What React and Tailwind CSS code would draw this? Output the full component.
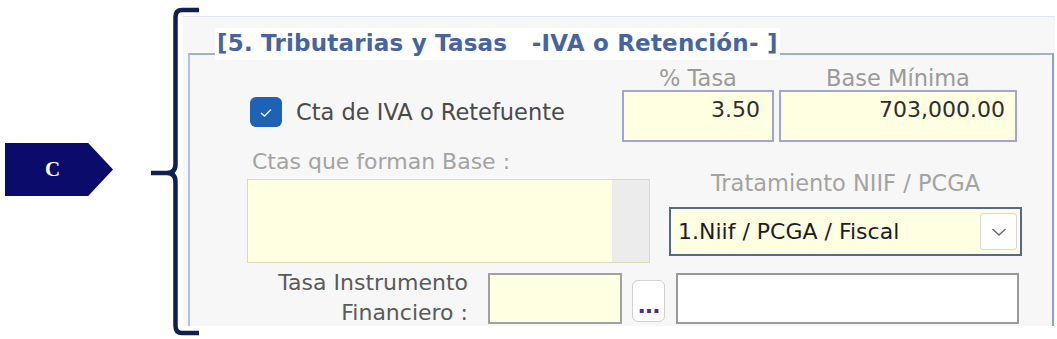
import React from "react";

/* ── SMALL PIECES ─────────────────────────────────────────────────────── */
const font = "font-['DejaVu_Sans',sans-serif]";

const Tag = () => (
  <div className="flex h-[53px] w-[108px] items-center bg-[#0b0b6b] pl-[40px] [clip-path:polygon(0_0,77%_0,100%_50%,77%_100%,0_100%)]">
    <span className="font-['Liberation_Serif',serif] text-[21px] font-bold text-white">
      C
    </span>
  </div>
);

const Brace = () => (
  <svg
    width="33"
    height="339"
    viewBox="0 0 33 339"
    className="relative z-10 shrink-0 overflow-visible"
  >
    <path
      d="M49,10 L32,10 Q25.5,10 25.5,17 L25.5,164 Q25.5,173 17,173 L1,173 M17,173 Q25.5,173 25.5,182 L25.5,326 Q25.5,333 32,333 L49,333"
      fill="none"
      stroke="#0f2050"
      strokeWidth="4.5"
    />
  </svg>
);

const Check = () => (
  <div className="flex h-[30px] w-[32px] items-center justify-center rounded-[6px] bg-[#1d62b5]">
    <svg width="14" height="11" viewBox="0 0 14 11">
      <polyline
        points="2,6 5.5,9 12,2.5"
        fill="none"
        stroke="#e8f0fb"
        strokeWidth="1.4"
      />
    </svg>
  </div>
);

/* ══════════════════════════════════════════════════════════════════════
   MAIN
   ══════════════════════════════════════════════════════════════════════ */
export default function App() {
  return (
    <div
      className={`flex h-[339px] w-[1057px] overflow-hidden bg-white ${font}`}
    >
      {/* ── tag ── */}
      <div className="flex w-[150px] shrink-0 items-center pl-[5px]">
        <Tag />
      </div>

      <Brace />

      {/* ── panel ── */}
      <div className="mt-[16px] h-[310px] w-[872px] shrink-0 overflow-hidden border-t border-[#e1e5ef] bg-[#f7f7f7]">
        <div className="relative mt-[36px] ml-[5px] h-[300px] w-[866px] border-x-2 border-t-2 border-l-[#b4c1dc] border-r-[#8ea0c8] border-t-[#9fb0d0] pt-[11px]">
          {/* title */}
          <div className="absolute top-[-27px] left-[25px] h-[32px] bg-white px-[2px] text-[23px] leading-[31px] font-bold tracking-[0.2px] whitespace-pre text-[#4864a0]">
            {"[5. Tributarias y Tasas   -IVA o Retención- ]"}
          </div>

          {/* row A */}
          <div className="flex">
            <div className="flex w-[432px] items-center gap-[14px] self-start pt-[31px] pl-[60px]">
              <Check />
              <span className="text-[22.5px] leading-[30px] text-[#4a4a4a]">
                Cta de IVA o Retefuente
              </span>
            </div>
            <div className="flex w-[152px] flex-col">
              <span className="h-[24px] text-center text-[22.5px] leading-[24px] text-[#9a9a9a]">
                % Tasa
              </span>
              <div className="h-[52px] border-2 border-[#a3a3d6] bg-[#ffffe1] pt-[3px] pr-[12px] text-right text-[22px] leading-[30px] text-[#2e2e2e]">
                3.50
              </div>
            </div>
            <div className="ml-[5px] flex w-[238px] flex-col">
              <span className="h-[24px] text-center text-[22.5px] leading-[24px] text-[#9a9a9a]">
                Base Mínima
              </span>
              <div className="h-[52px] border-2 border-[#a3a3d6] bg-[#ffffe1] pt-[3px] pr-[10px] text-right text-[22px] leading-[30px] text-[#2e2e2e]">
                703,000.00
              </div>
            </div>
          </div>

          {/* row B */}
          <div className="mt-[8px] flex pl-[57px]">
            <div className="flex w-[403px] flex-col">
              <span className="h-[24px] pl-[5px] text-[22px] leading-[24px] text-[#a3a3a3]">
                Ctas que forman Base :
              </span>
              <div className="mt-[5px] flex h-[84px] border border-[#dcdcb4] bg-[#ffffe1]">
                <div className="flex-1" />
                <div className="w-[37px] bg-[#ececec]" />
              </div>
            </div>
            <div className="ml-[19px] flex w-[353px] flex-col pt-[21px]">
              <span className="h-[24px] text-center text-[22.5px] leading-[24px] text-[#a3a3a3]">
                Tratamiento NIIF / PCGA
              </span>
              <div className="mt-[12px] flex h-[49px] items-center border-2 border-[#56688f] bg-[#ffffe1] pr-[3px] pl-[7px]">
                <span className="flex-1 text-[22px] leading-[30px] text-[#1c1c28]">
                  1.Niif / PCGA / Fiscal
                </span>
                <div className="flex h-[37px] w-[37px] items-center justify-center rounded-[3px] border border-[#d6d6d6] bg-white">
                  <svg width="16" height="10" viewBox="0 0 16 10">
                    <polyline
                      points="1.5,2 8,8 14.5,2"
                      fill="none"
                      stroke="#6e6e6e"
                      strokeWidth="1.6"
                    />
                  </svg>
                </div>
              </div>
            </div>
          </div>

          {/* row C */}
          <div className="mt-[5px] flex items-start">
            <div className="w-[278px] text-right text-[22px] leading-[30px] text-[#5a5a5a]">
              Tasa Instrumento
              <br />
              Financiero :
            </div>
            <div className="mt-[5px] ml-[20px] h-[51px] w-[134px] border-2 border-[#a0a0a0] bg-[#ffffe1]" />
            <div className="mt-[12px] ml-[10px] flex h-[42px] w-[33px] justify-center rounded-[6px] border border-[#d0d0d0] bg-white pt-[14px]">
              <span className="text-[22px] leading-[22px] font-bold tracking-[-1px] text-[#4b2e83]">
                ...
              </span>
            </div>
            <div className="mt-[5px] ml-[11px] h-[51px] w-[343px] border-2 border-[#9a9a9a] bg-white" />
          </div>
        </div>
      </div>
    </div>
  );
}
